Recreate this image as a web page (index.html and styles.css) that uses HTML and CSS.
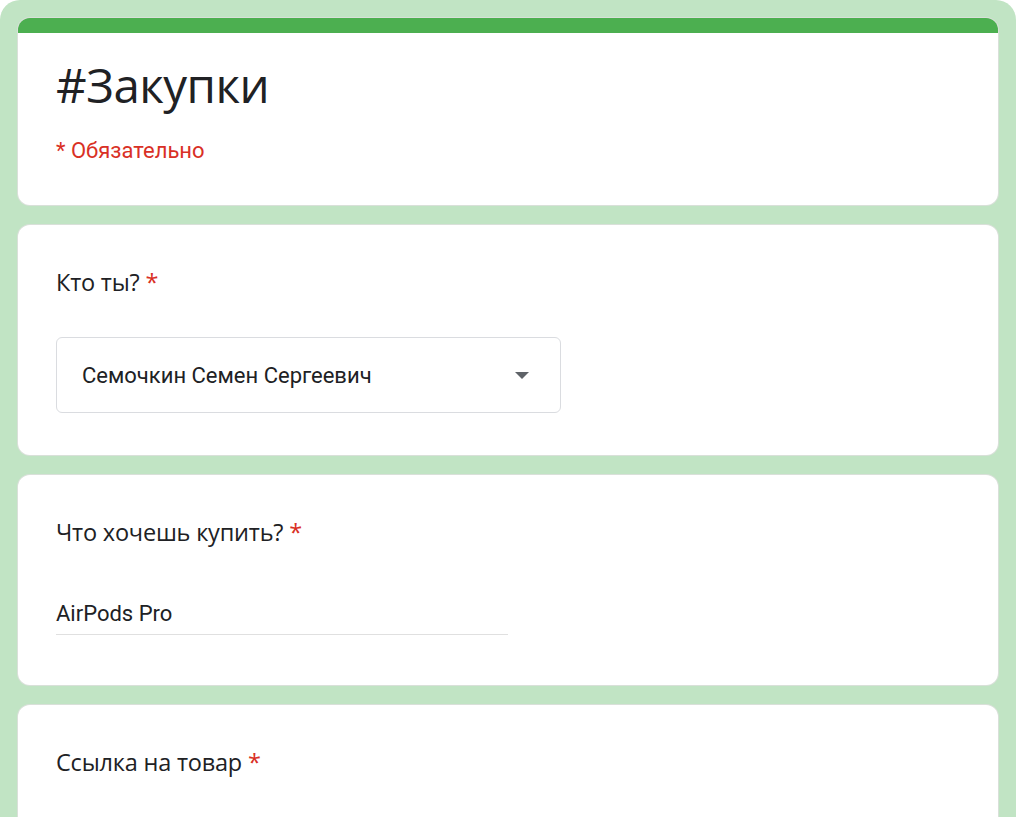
FILE: index.html
```html
<!DOCTYPE html>
<html lang="ru">
<head>
<meta charset="utf-8">
<title>#Закупки</title>
<link rel="stylesheet" href="styles.css">
</head>
<body>
<div class="page">
  <div class="card header">
    <h1 class="form-title">#Закупки</h1>
    <div class="required-note">* Обязательно</div>
  </div>
  <div class="card question">
    <div class="q-title">Кто ты? <span class="star">*</span></div>
    <div class="select">
      <span class="select-value">Семочкин Семен Сергеевич</span>
      <svg class="select-arrow" width="14" height="7" viewBox="0 0 14 7"><path d="M0 0h14L7 7z" fill="#5f6368"/></svg>
    </div>
  </div>
  <div class="card question q-text">
    <div class="q-title">Что хочешь купить? <span class="star">*</span></div>
    <div class="text-input">AirPods Pro</div>
  </div>
  <div class="card question q-last">
    <div class="q-title">Ссылка на товар <span class="star">*</span></div>
  </div>
</div>
</body>
</html>
```
FILE: styles.css
```css
html, body {
  margin: 0;
  padding: 0;
  background: #ffffff;
}
body {
  width: 1016px;
  height: 817px;
  overflow: hidden;
}
.page {
  background: #c1e4c4;
  border-radius: 20px 20px 0 0;
  padding: 18px 18px 0;
  height: 817px;
  box-sizing: border-box;
  display: flex;
  flex-direction: column;
  gap: 20px;
  overflow: hidden;
}
.card {
  background: #ffffff;
  border-radius: 12px;
  box-shadow: 0 0 0 1px #d9e0d9;
  padding: 0 38px;
  flex-shrink: 0;
}
.header {
  border-top: 15px solid #4caf50;
  height: 187px;
  box-sizing: border-box;
  padding-top: 22px;
}
.form-title {
  margin: 0;
  font-family: "Open Sans", Roboto, sans-serif;
  font-weight: 400;
  font-size: 47.5px;
  line-height: 60px;
  color: #202124;
  letter-spacing: -0.5px;
}
.required-note {
  margin-top: 21px;
  font-family: Roboto, "Noto Sans", sans-serif;
  font-size: 22px;
  line-height: 30px;
  color: #d93025;
}
.question {
  padding-top: 40px;
  box-sizing: border-box;
  height: 230px;
}
.q-text {
  height: 210px;
}
.q-last {
  height: auto;
  flex: 1 1 auto;
  border-radius: 12px 12px 0 0;
}
.q-title {
  font-family: "Open Sans", Roboto, sans-serif;
  font-size: 23.5px;
  line-height: 34px;
  color: #202124;
  letter-spacing: -0.2px;
}
.star {
  color: #d93025;
}
.select {
  margin-top: 38px;
  width: 505px;
  height: 76px;
  box-sizing: border-box;
  border: 1px solid #dadce0;
  border-radius: 6px;
  display: flex;
  align-items: center;
  justify-content: space-between;
  padding: 0 31px 0 25px;
}
.select-value {
  font-family: Roboto, "Noto Sans", sans-serif;
  font-size: 22px;
  color: #202124;
}
.select-arrow {
  display: block;
}
.text-input {
  margin-top: 50px;
  width: 452px;
  font-family: Roboto, "Noto Sans", sans-serif;
  font-size: 22px;
  line-height: 30px;
  color: #202124;
  padding-bottom: 5px;
  border-bottom: 1px solid #e0e0e0;
}
```
